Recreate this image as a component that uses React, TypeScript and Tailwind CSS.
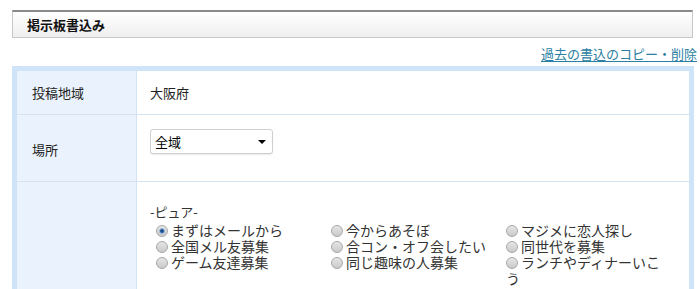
import React from 'react';

const jp = { fontFamily: '"Noto Sans CJK JP", "Noto Sans", sans-serif' };

function Radio({ checked }: { checked?: boolean }) {
    return (
        <span className="inline-flex items-center justify-center w-[12px] h-[12px] rounded-full border border-[#a9a9a9] bg-gradient-to-b from-[#e6e6e6] to-[#c9c9c9] align-middle mr-[3px] relative top-[-1px]">
            {checked && <span className="w-[6px] h-[6px] rounded-full bg-[#1f4f8f] border border-[#9fc0ea]" />}
        </span>
    );
}

const options = [
    ['まずはメールから', '今からあそぼ', 'マジメに恋人探し'],
    ['全国メル友募集', '合コン・オフ会したい', '同世代を募集'],
    ['ゲーム友達募集', '同じ趣味の人募集', 'ランチやディナーいこう'],
];

export default function App() {
    return (
        <div className="w-[700px] h-[289px] overflow-hidden bg-white text-[#222]" style={jp}>
            {/* Header */}
            <div className="ml-[12px] mt-[10px] w-[681px] h-[28px] border border-[#c8c8c8] border-t-2 border-t-[#8a8a8a] bg-gradient-to-b from-white to-[#efefef] flex items-center pl-[14px]">
                <span className="text-[13px] font-bold text-[#111]">掲示板書込み</span>
            </div>

            <div className="flex justify-end pr-[3px] mt-[7px] h-[18px] items-center">
                <a className="text-[13px] text-[#2b7fa3] underline underline-offset-2 decoration-[#2b7fa3]">過去の書込のコピー・削除</a>
            </div>

            {/* Form table */}
            <div className="ml-[12px] mt-[3px] w-[682px] border-[5px] border-b-0 border-[#cfe4f8]">
                <div className="grid grid-cols-[120px_1fr] h-[44px] border-b border-[#d3e3f1]">
                    <div className="bg-[#eaf3fd] border-r border-[#d3e3f1] flex items-center pl-[15px] text-[13px]">投稿地域</div>
                    <div className="flex items-center pl-[13px] text-[13px]">大阪府</div>
                </div>
                <div className="grid grid-cols-[120px_1fr] h-[67px] border-b border-[#d3e3f1]">
                    <div className="bg-[#eaf3fd] border-r border-[#d3e3f1] flex items-center pl-[15px] text-[13px] pt-[4px]">場所</div>
                    <div className="pl-[13px] pt-[14px]">
                        <div className="w-[123px] h-[25px] border border-[#d0d0d0] rounded-[3px] bg-white shadow-[0_1px_1px_rgba(0,0,0,0.08)] flex items-center justify-between pl-[4px] pr-[6px] text-[13px] text-black">
                            <span>全域</span>
                            <span className="w-0 h-0 border-l-[4px] border-r-[4px] border-t-[4px] border-l-transparent border-r-transparent border-t-black" />
                        </div>
                    </div>
                </div>
                <div className="grid grid-cols-[120px_1fr] h-[120px]">
                    <div className="bg-[#eaf3fd] border-r border-[#d3e3f1]" />
                    <div className="pl-[13px] pt-[22px] text-[14px] leading-[16px] text-[#333]">
                        <div className="text-[13px] h-[18px]">-ピュア-</div>
                        {options.map((row, r) => (
                            <div key={r} className="grid grid-cols-[175px_175px_163px] pl-[6px] h-[16px]">
                                {row.map((label, c) => (
                                    <div key={c} className="leading-[16px]">
                                        <Radio checked={r === 0 && c === 0} />
                                        {label}
                                    </div>
                                ))}
                            </div>
                        ))}
                    </div>
                </div>
            </div>
        </div>
    );
}
